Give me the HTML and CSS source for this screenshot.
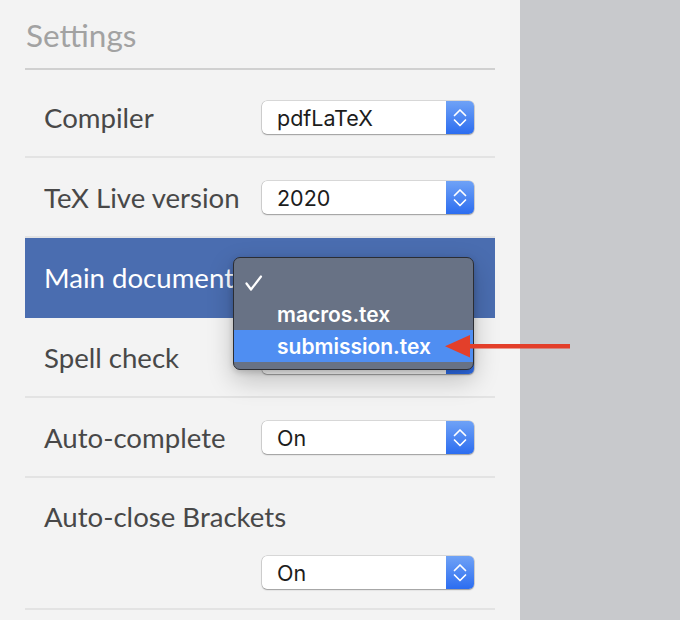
FILE: index.html
```html
<!DOCTYPE html>
<html>
<head>
<meta charset="utf-8">
<link rel="stylesheet" href="styles.css">
</head>
<body>
<div class="page">
  <div class="panel">
    <div class="title">Settings</div>
    <div class="rows">
      <div class="row">
        <div class="label">Compiler</div>
        <div class="select"><span class="value">pdfLaTeX</span><span class="stepper"><svg width="28" height="33" viewBox="0 0 28 33"><path d="M8.5 14.5 L14 9 L19.5 14.5 M8.5 19 L14 24.5 L19.5 19" fill="none" stroke="#fff" stroke-width="1.7" stroke-linecap="round" stroke-linejoin="round"/></svg></span></div>
      </div>
      <div class="row">
        <div class="label">TeX Live version</div>
        <div class="select"><span class="value">2020</span><span class="stepper"><svg width="28" height="33" viewBox="0 0 28 33"><path d="M8.5 14.5 L14 9 L19.5 14.5 M8.5 19 L14 24.5 L19.5 19" fill="none" stroke="#fff" stroke-width="1.7" stroke-linecap="round" stroke-linejoin="round"/></svg></span></div>
      </div>
      <div class="row active">
        <div class="label">Main document</div>
        <div class="menu">
          <div class="item"><span class="check"><svg width="18" height="17" viewBox="0 0 18 17"><path d="M1.5 8.5 L6 14.5 L16 1.5" fill="none" stroke="#fff" stroke-width="2.2" stroke-linecap="round" stroke-linejoin="round"/></svg></span><span class="text"></span></div>
          <div class="item"><span class="check"></span><span class="text">macros.tex</span></div>
          <div class="item hl"><span class="check"></span><span class="text">submission.tex</span></div>
        </div>
      </div>
      <div class="row">
        <div class="label">Spell check</div>
        <div class="select"><span class="value"></span><span class="stepper"><svg width="28" height="33" viewBox="0 0 28 33"><path d="M8.5 14.5 L14 9 L19.5 14.5 M8.5 19 L14 24.5 L19.5 19" fill="none" stroke="#fff" stroke-width="1.7" stroke-linecap="round" stroke-linejoin="round"/></svg></span></div>
      </div>
      <div class="row">
        <div class="label">Auto-complete</div>
        <div class="select"><span class="value">On</span><span class="stepper"><svg width="28" height="33" viewBox="0 0 28 33"><path d="M8.5 14.5 L14 9 L19.5 14.5 M8.5 19 L14 24.5 L19.5 19" fill="none" stroke="#fff" stroke-width="1.7" stroke-linecap="round" stroke-linejoin="round"/></svg></span></div>
      </div>
      <div class="row stacked">
        <div class="label">Auto-close Brackets</div>
        <div class="select"><span class="value">On</span><span class="stepper"><svg width="28" height="33" viewBox="0 0 28 33"><path d="M8.5 14.5 L14 9 L19.5 14.5 M8.5 19 L14 24.5 L19.5 19" fill="none" stroke="#fff" stroke-width="1.7" stroke-linecap="round" stroke-linejoin="round"/></svg></span></div>
      </div>
    </div>
  </div>
  <div class="side"></div>
  <svg class="arrow" width="132" height="30" viewBox="0 0 132 30">
    <rect x="25" y="12" width="103" height="4.5" fill="#e33f2a"/>
    <polygon points="3,14.2 28,3 28,25.5" fill="#e33f2a"/>
  </svg>
</div>
</body>
</html>
```

FILE: styles.css
```css
* { box-sizing: border-box; }
html, body { margin: 0; padding: 0; }
body {
  width: 680px;
  height: 620px;
  overflow: hidden;
  background: #c8c9cc;
  font-family: "Lato", "Open Sans", sans-serif;
}
.page {
  position: relative;
  display: flex;
  width: 680px;
  height: 620px;
}
.panel {
  width: 520px;
  height: 620px;
  background: #f3f3f3;
  padding: 0 25px;
}
.side {
  flex: 1;
  background: #c8c9cc;
}
.title {
  font-size: 31.5px;
  line-height: 36px;
  padding: 17px 0 0 1px;
  height: 70px;
  color: #a2a2a2;
  border-bottom: 2px solid #d0d0d0;
}
.rows {
  padding-top: 8px;
}
.row {
  display: flex;
  align-items: center;
  height: 80px;
  padding: 0 21px 0 19px;
  border-bottom: 2px solid #e3e3e3;
}
.row .label {
  flex: 1;
  font-size: 27.6px;
  color: #484848;
  white-space: nowrap;
}
.row.active {
  position: relative;
  background: #4a6db0;
  border-bottom-color: #4a6db0;
}
.row.active .label {
  color: #ffffff;
}
.row.stacked {
  flex-direction: column;
  align-items: stretch;
  height: auto;
  padding-bottom: 19px;
}
.row.stacked .label {
  flex: none;
  height: 78px;
  line-height: 78px;
}
.row.stacked .select {
  align-self: flex-end;
}
.select {
  display: flex;
  width: 212px;
  height: 33px;
  background: #ffffff;
  border-radius: 5px;
  overflow: hidden;
  box-shadow: 0 0 0 0.5px rgba(0, 0, 0, 0.22), 0 1px 1.5px rgba(0, 0, 0, 0.28);
}
.select .value {
  flex: 1;
  padding: 2px 0 0 15px;
  font-family: "Inter", "Liberation Sans", sans-serif;
  font-size: 21.5px;
  line-height: 31px;
  color: #1c1c1c;
}
.stepper {
  width: 28px;
  height: 33px;
  background: linear-gradient(#6fa2f6, #2c6df0);
  display: flex;
}
.menu {
  position: absolute;
  left: 208px;
  top: 19px;
  width: 241px;
  height: 113px;
  padding: 8px 0 7px;
  background: #687285;
  border: 1px solid #2b2d33;
  border-radius: 7px;
  box-shadow: 0 10px 26px rgba(0, 0, 0, 0.22), 0 2px 6px rgba(0, 0, 0, 0.18);
  z-index: 2;
}
.item {
  display: flex;
  align-items: center;
  height: 32px;
}
.item.hl {
  background: #4f8ef2;
}
.check {
  width: 43px;
  padding: 3px 0 0 11px;
  display: flex;
  align-items: center;
}
.item .text {
  font-family: "Inter", "Liberation Sans", sans-serif;
  font-weight: 600;
  font-size: 21px;
  color: #ffffff;
}
.arrow {
  position: absolute;
  left: 442px;
  top: 332px;
  z-index: 3;
}
```
